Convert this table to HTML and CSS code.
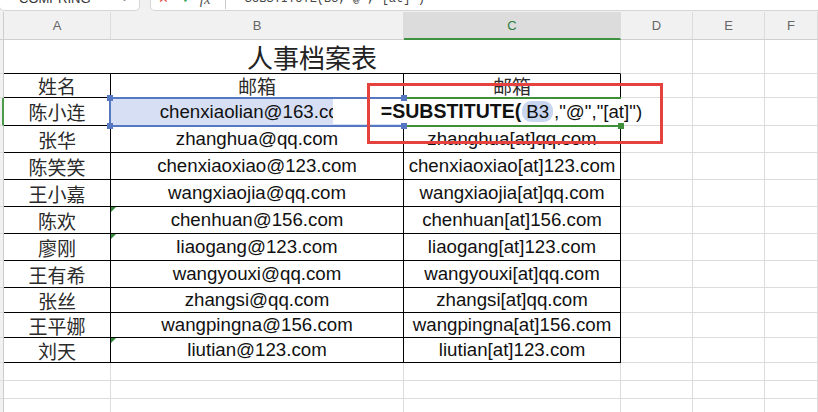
FILE: index.html
```html
<!DOCTYPE html>
<html lang="zh-CN">
<head>
    <meta charset="UTF-8">
    <title>人事档案表</title>
    <link rel="stylesheet" href="styles.css">
</head>
<body>

<div class="toolbar">
    <div class="namebox"><span>COMPRING</span><span class="caret">&#8964;</span></div>
    <div class="formulabar">
        <span class="tb-x">&#10005;</span>
        <span class="tb-ok">&#10003;</span>
        <span class="tb-fx">fx</span>
        <span class="tb-sep"></span>
        <span class="tb-text">=SUBSTITUTE(B3,"@","[at]")</span>
    </div>
</div>

<div class="sheet">
    <!-- column letters -->
    <div class="row colhead">
        <div class="s"></div>
        <div class="a">A</div>
        <div class="b">B</div>
        <div class="c on">C</div>
        <div class="d">D</div>
        <div class="e">E</div>
        <div class="f">F</div>
    </div>

    <div class="row h34">
        <div class="s"></div>
        <div class="title">人事档案表</div>
        <div class="d"></div><div class="e"></div><div class="f"></div>
    </div>

    <div class="row h24">
        <div class="s"></div>
        <div class="a t name">姓名</div>
        <div class="b t name">邮箱</div>
        <div class="c t name">邮箱</div>
        <div class="d"></div><div class="e"></div><div class="f"></div>
    </div>

    <div class="row h28">
        <div class="s active"></div>
        <div class="a t name">陈小连</div>
        <div class="b t mail ref">chenxiaolian@163.com
            <div class="refbox">
                <i class="sq tl"></i><i class="sq tr"></i><i class="sq bl"></i><i class="sq br"></i>
            </div>
        </div>
        <div class="c t mail cur">
            <div class="editor"><b>=SUBSTITUTE(</b><span class="pill">B3</span>,"@","[at]")</div>
            <div class="selbox"><i class="handle"></i></div>
        </div>
        <div class="d"></div><div class="e"></div><div class="f"></div>
    </div>

    <div class="row h27">
        <div class="s"></div>
        <div class="a t name">张华</div>
        <div class="b t mail">zhanghua@qq.com</div>
        <div class="c t mail">zhanghua[at]qq.com</div>
        <div class="d"></div><div class="e"></div><div class="f"></div>
    </div>

    <div class="row h27">
        <div class="s"></div>
        <div class="a t name">陈笑笑</div>
        <div class="b t mail">chenxiaoxiao@123.com</div>
        <div class="c t mail">chenxiaoxiao[at]123.com</div>
        <div class="d"></div><div class="e"></div><div class="f"></div>
    </div>

    <div class="row h27">
        <div class="s"></div>
        <div class="a t name">王小嘉</div>
        <div class="b t mail">wangxiaojia@qq.com</div>
        <div class="c t mail">wangxiaojia[at]qq.com</div>
        <div class="d"></div><div class="e"></div><div class="f"></div>
    </div>

    <div class="row h27">
        <div class="s"></div>
        <div class="a t name">陈欢</div>
        <div class="b t mail flag">chenhuan@156.com</div>
        <div class="c t mail">chenhuan[at]156.com</div>
        <div class="d"></div><div class="e"></div><div class="f"></div>
    </div>

    <div class="row h27">
        <div class="s"></div>
        <div class="a t name">廖刚</div>
        <div class="b t mail flag">liaogang@123.com</div>
        <div class="c t mail">liaogang[at]123.com</div>
        <div class="d"></div><div class="e"></div><div class="f"></div>
    </div>

    <div class="row h27">
        <div class="s"></div>
        <div class="a t name">王有希</div>
        <div class="b t mail">wangyouxi@qq.com</div>
        <div class="c t mail">wangyouxi[at]qq.com</div>
        <div class="d"></div><div class="e"></div><div class="f"></div>
    </div>

    <div class="row h25">
        <div class="s"></div>
        <div class="a t name">张丝</div>
        <div class="b t mail">zhangsi@qq.com</div>
        <div class="c t mail">zhangsi[at]qq.com</div>
        <div class="d"></div><div class="e"></div><div class="f"></div>
    </div>

    <div class="row h25">
        <div class="s"></div>
        <div class="a t name">王平娜</div>
        <div class="b t mail">wangpingna@156.com</div>
        <div class="c t mail">wangpingna[at]156.com</div>
        <div class="d"></div><div class="e"></div><div class="f"></div>
    </div>

    <div class="row h25">
        <div class="s"></div>
        <div class="a t name">刘天</div>
        <div class="b t mail flag">liutian@123.com</div>
        <div class="c t mail">liutian[at]123.com</div>
        <div class="d"></div><div class="e"></div><div class="f"></div>
    </div>

    <!-- empty rows -->
    <div class="row h18">
        <div class="s"></div><div class="a"></div><div class="b"></div><div class="c"></div>
        <div class="d"></div><div class="e"></div><div class="f"></div>
    </div>
    <div class="row h18">
        <div class="s"></div><div class="a"></div><div class="b"></div><div class="c"></div>
        <div class="d"></div><div class="e"></div><div class="f"></div>
    </div>
    <div class="row h18">
        <div class="s"></div><div class="a"></div><div class="b"></div><div class="c"></div>
        <div class="d"></div><div class="e"></div><div class="f"></div>
    </div>

    <!-- annotation -->
    <div class="mark"></div>
</div>

</body>
</html>
```

FILE: styles.css
```css
* {
    box-sizing: border-box;
}

body {
    margin: 0;
    width: 818px;
    height: 412px;
    overflow: hidden;
    background: #fff;
    font-family: "Liberation Sans", Arial, sans-serif;
}

/* top bar, mostly scrolled out of view */
.toolbar {
    display: flex;
    gap: 10px;
    height: 12px;
    background: #f1f1f1;
    overflow: hidden;
}

.namebox {
    width: 141px;
    height: 11px;
    margin-left: -1px;
    padding: 0 9px 0 19px;
    display: flex;
    justify-content: space-between;
    background: #fff;
    border: 1px solid #d5d5d5;
    border-top: none;
    border-radius: 0 0 5px 5px;
}

.namebox span {
    margin-top: -9px;
    line-height: 16px;
    font-size: 13px;
    color: #333;
}

.namebox .caret {
    margin-top: -11px;
    color: #888;
}

.formulabar {
    flex: 1;
    height: 11px;
    margin-right: -1px;
    padding-left: 7px;
    display: flex;
    align-items: flex-start;
    background: #fff;
    border: 1px solid #d5d5d5;
    border-top: none;
    border-radius: 0 0 0 5px;
}

.formulabar span {
    margin-top: -9px;
    line-height: 16px;
    font-size: 13px;
}

.tb-x {
    color: #e0514b;
    font-family: "DejaVu Sans", sans-serif;
    margin-right: 13px;
}

.tb-ok {
    color: #3aa35a;
    font-family: "DejaVu Sans", sans-serif;
    margin-right: 7px;
}

.tb-fx {
    color: #555;
    font-style: italic;
    font-family: "Liberation Serif", serif;
    font-size: 15px !important;
}

.tb-sep {
    width: 1px;
    height: 18px;
    margin: -9px 12px 0 14px;
    background: #ccc;
}

.tb-text {
    color: #444;
    font-family: "Liberation Mono", monospace;
    font-size: 12px !important;
}

/* sheet */
.sheet {
    position: relative;
}

.row {
    display: flex;
}

.row > div {
    flex-shrink: 0;
    display: flex;
    align-items: center;
    justify-content: center;
    white-space: nowrap;
    border-right: 1px solid #dcdcdc;
    border-bottom: 1px solid #dcdcdc;
}

.s { width: 4px; background: #f1f1f1; border-right-color: #cdcdcd !important; }
.a { width: 107px; }
.b { width: 293px; }
.c { width: 217px; }
.d { width: 72px; }
.e { width: 72px; }
.row > .f { flex: 1; flex-shrink: 1; }

.s.active {
    background: #f1f1f1;
    border-right: 2px solid #4a9a4a !important;
}

.colhead {
    height: 28px;
    background: #f1f1f1;
    font-size: 13px;
    color: #666;
}

.colhead > div {
    border-bottom-color: #cfcfcf;
}

.colhead .on {
    background: #dcdcdc;
    color: #2e8040;
    border-bottom: 2px solid #3f9142;
}

.h34 { height: 34px; }
.h28 { height: 28px; }
.h27 { height: 27px; }
.h25 { height: 25px; }
.h24 { height: 24px; }
.h18 { height: 18px; }

.title {
    width: 617px;
    font-family: "Noto Sans CJK SC", sans-serif;
    font-size: 26px;
    color: #222;
    border-bottom-color: #000 !important;
}

.t {
    border-right-color: #000 !important;
    border-bottom-color: #000 !important;
}

.name {
    font-family: "Noto Sans CJK SC", sans-serif;
    font-size: 19px;
    color: #2b2b2b;
}

.mail {
    font-size: 18.7px;
    color: #111;
}

/* error flags */
.flag {
    position: relative;
}

.flag::before {
    content: "";
    position: absolute;
    top: 0;
    left: 0;
    border-top: 5px solid #2f8a3a;
    border-right: 5px solid transparent;
}

/* referenced cell B3 */
.ref {
    position: relative;
    background: #d6dff3;
}

.refbox {
    position: absolute;
    top: -1px;
    left: -2px;
    right: -2px;
    bottom: -2px;
    border: 2px solid #5677c1;
}

.sq {
    position: absolute;
    width: 6px;
    height: 6px;
    background: #5677c1;
    z-index: 4;
}

.sq.tl { top: -4px; left: -4px; }
.sq.tr { top: -4px; right: -4px; }
.sq.bl { bottom: -4px; left: -4px; }
.sq.br { bottom: -4px; right: -4px; }

/* active cell C3 being edited */
.cur {
    position: relative;
}

.editor {
    position: absolute;
    top: 1px;
    bottom: 1px;
    left: -71px;
    right: -70px;
    z-index: 2;
    display: flex;
    align-items: center;
    justify-content: center;
    background: #fff;
    font-size: 18.7px;
    color: #111;
}

.editor b {
    font-size: 19.5px;
}

.pill {
    margin: 0 1px 0 1px;
    padding: 0 4px;
    line-height: 21px;
    border-radius: 9px;
    background: #c9d6f0;
}

.selbox {
    position: absolute;
    top: -1px;
    left: -1px;
    right: -1px;
    bottom: -2px;
    z-index: 3;
    border-top: 2px solid #3f8f3a;
    border-bottom: 2px solid #3f8f3a;
}

.handle {
    position: absolute;
    right: -3px;
    bottom: -4px;
    width: 6px;
    height: 6px;
    background: #3f8f3a;
}

/* red annotation box */
.mark {
    position: absolute;
    top: 71px;
    left: 367px;
    width: 296px;
    height: 61px;
    border: 3px solid #e5423f;
    z-index: 5;
}
```
